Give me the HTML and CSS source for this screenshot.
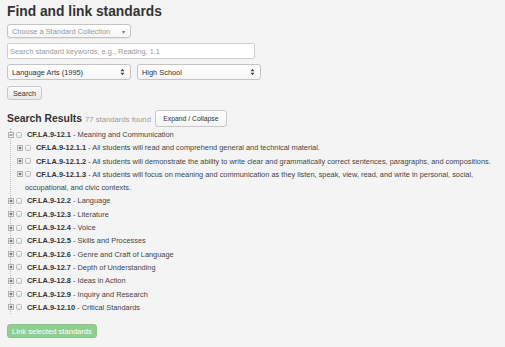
FILE: index.html
```html
<!DOCTYPE html>
<html lang="en">
<head>
  <meta charset="UTF-8">
  <title>Find and link standards</title>
  <link rel="stylesheet" href="styles.css">
</head>
<body>

  <div class="page">
    <h1>Find and link standards</h1>

    <!-- Filters -->
    <div class="fake-select collection">
      <span class="placeholder">Choose a Standard Collection</span>
      <span class="caret">&#9662;</span>
    </div>

    <div class="search-input">Search standard keywords, e.g., Reading, 1.1</div>

    <div class="select-row">
      <div class="fake-select native">
        <span>Language Arts (1995)</span>
        <svg class="updown" width="5" height="8" viewBox="0 0 5 8"><path d="M0.5 3.2 L2.5 0.8 L4.5 3.2 Z M0.5 4.8 L2.5 7.2 L4.5 4.8 Z" fill="#444"/></svg>
      </div>
      <div class="fake-select native">
        <span>High School</span>
        <svg class="updown" width="5" height="8" viewBox="0 0 5 8"><path d="M0.5 3.2 L2.5 0.8 L4.5 3.2 Z M0.5 4.8 L2.5 7.2 L4.5 4.8 Z" fill="#444"/></svg>
      </div>
    </div>

    <button class="btn search-btn">Search</button>

    <!-- Results -->
    <div class="results-head">
      <h3>Search Results</h3>
      <span class="count">77 standards found</span>
      <button class="btn toggle-btn">Expand / Collapse</button>
    </div>

    <ul class="tree">
      <li class="node">
        <div class="row">
          <svg class="ocl" width="6" height="6" viewBox="0 0 6 6"><rect x="0.5" y="0.5" width="5" height="5" fill="#fafafa" stroke="#b0b0b0"/><path d="M1.5 3 H4.5" stroke="#555"/></svg><span class="check"></span><b>CF.LA.9-12.1</b> - Meaning and Communication
        </div>
        <ul class="children">
          <li class="row">
            <svg class="ocl" width="6" height="6" viewBox="0 0 6 6"><rect x="0.5" y="0.5" width="5" height="5" fill="#fafafa" stroke="#b0b0b0"/><path d="M1.5 3 H4.5 M3 1.5 V4.5" stroke="#555"/></svg><span class="check"></span><b>CF.LA.9-12.1.1</b> - All students will read and comprehend general and technical material.
          </li>
          <li class="row">
            <svg class="ocl" width="6" height="6" viewBox="0 0 6 6"><rect x="0.5" y="0.5" width="5" height="5" fill="#fafafa" stroke="#b0b0b0"/><path d="M1.5 3 H4.5 M3 1.5 V4.5" stroke="#555"/></svg><span class="check"></span><b>CF.LA.9-12.1.2</b> - All students will demonstrate the ability to write clear and grammatically correct sentences, paragraphs, and compositions.
          </li>
          <li class="row">
            <svg class="ocl" width="6" height="6" viewBox="0 0 6 6"><rect x="0.5" y="0.5" width="5" height="5" fill="#fafafa" stroke="#b0b0b0"/><path d="M1.5 3 H4.5 M3 1.5 V4.5" stroke="#555"/></svg><span class="check"></span><b>CF.LA.9-12.1.3</b> - All students will focus on meaning and communication as they listen, speak, view, read, and write in personal, social, occupational, and civic contexts.
          </li>
        </ul>
      </li>
      <li class="row"><svg class="ocl" width="6" height="6" viewBox="0 0 6 6"><rect x="0.5" y="0.5" width="5" height="5" fill="#fafafa" stroke="#b0b0b0"/><path d="M1.5 3 H4.5 M3 1.5 V4.5" stroke="#555"/></svg><span class="check"></span><b>CF.LA.9-12.2</b> - Language</li>
      <li class="row"><svg class="ocl" width="6" height="6" viewBox="0 0 6 6"><rect x="0.5" y="0.5" width="5" height="5" fill="#fafafa" stroke="#b0b0b0"/><path d="M1.5 3 H4.5 M3 1.5 V4.5" stroke="#555"/></svg><span class="check"></span><b>CF.LA.9-12.3</b> - Literature</li>
      <li class="row"><svg class="ocl" width="6" height="6" viewBox="0 0 6 6"><rect x="0.5" y="0.5" width="5" height="5" fill="#fafafa" stroke="#b0b0b0"/><path d="M1.5 3 H4.5 M3 1.5 V4.5" stroke="#555"/></svg><span class="check"></span><b>CF.LA.9-12.4</b> - Voice</li>
      <li class="row"><svg class="ocl" width="6" height="6" viewBox="0 0 6 6"><rect x="0.5" y="0.5" width="5" height="5" fill="#fafafa" stroke="#b0b0b0"/><path d="M1.5 3 H4.5 M3 1.5 V4.5" stroke="#555"/></svg><span class="check"></span><b>CF.LA.9-12.5</b> - Skills and Processes</li>
      <li class="row"><svg class="ocl" width="6" height="6" viewBox="0 0 6 6"><rect x="0.5" y="0.5" width="5" height="5" fill="#fafafa" stroke="#b0b0b0"/><path d="M1.5 3 H4.5 M3 1.5 V4.5" stroke="#555"/></svg><span class="check"></span><b>CF.LA.9-12.6</b> - Genre and Craft of Language</li>
      <li class="row"><svg class="ocl" width="6" height="6" viewBox="0 0 6 6"><rect x="0.5" y="0.5" width="5" height="5" fill="#fafafa" stroke="#b0b0b0"/><path d="M1.5 3 H4.5 M3 1.5 V4.5" stroke="#555"/></svg><span class="check"></span><b>CF.LA.9-12.7</b> - Depth of Understanding</li>
      <li class="row"><svg class="ocl" width="6" height="6" viewBox="0 0 6 6"><rect x="0.5" y="0.5" width="5" height="5" fill="#fafafa" stroke="#b0b0b0"/><path d="M1.5 3 H4.5 M3 1.5 V4.5" stroke="#555"/></svg><span class="check"></span><b>CF.LA.9-12.8</b> - Ideas in Action</li>
      <li class="row"><svg class="ocl" width="6" height="6" viewBox="0 0 6 6"><rect x="0.5" y="0.5" width="5" height="5" fill="#fafafa" stroke="#b0b0b0"/><path d="M1.5 3 H4.5 M3 1.5 V4.5" stroke="#555"/></svg><span class="check"></span><b>CF.LA.9-12.9</b> - Inquiry and Research</li>
      <li class="row"><svg class="ocl" width="6" height="6" viewBox="0 0 6 6"><rect x="0.5" y="0.5" width="5" height="5" fill="#fafafa" stroke="#b0b0b0"/><path d="M1.5 3 H4.5 M3 1.5 V4.5" stroke="#555"/></svg><span class="check"></span><b>CF.LA.9-12.10</b> - Critical Standards</li>
    </ul>

    <button class="btn link-btn" disabled>Link selected standards</button>
  </div>

</body>
</html>
```

FILE: styles.css
```css
* {
  box-sizing: border-box;
}

body {
  margin: 0;
  background-color: #f4f4f4;
  color: #333;
  font-family: "Liberation Sans", Arial, sans-serif;
  font-size: 7.4px;
}

.page {
  padding: 4px 7px 0 7px;
}

h1 {
  margin: 0 0 4px;
  font-size: 13.8px;
  line-height: 16px;
  font-weight: bold;
  color: #333;
}

.fake-select {
  display: flex;
  align-items: center;
  justify-content: space-between;
  background: linear-gradient(#fff, #f6f6f6);
  border: 1px solid #c4c4c4;
  border-radius: 3px;
  padding: 0 4px;
}

.collection {
  width: 124px;
  height: 14px;
  margin-bottom: 5px;
  box-shadow: 0 1px 1px rgba(0, 0, 0, 0.06);
}

.collection .placeholder {
  color: #999;
}

.collection .caret {
  color: #777;
  font-size: 6px;
  margin-right: 1px;
}

.search-input {
  width: 248px;
  height: 16px;
  margin-bottom: 5px;
  padding: 0 2px;
  display: flex;
  align-items: center;
  background-color: #fff;
  border: 1px solid #d0d0d0;
  border-radius: 2px;
  color: #999;
}

.select-row {
  display: flex;
  gap: 6px;
  margin-bottom: 6px;
}

.native {
  width: 124px;
  height: 16px;
  color: #333;
}

.updown {
  margin-right: 1px;
}

.btn {
  font-family: "Liberation Sans", Arial, sans-serif;
  color: #333;
  background: linear-gradient(#fdfdfd, #e8e8e8);
  border: 1px solid #c8c8c8;
  border-radius: 3px;
  cursor: pointer;
  padding: 0;
}

.search-btn {
  display: block;
  width: 35px;
  height: 14px;
  font-size: 7.3px;
  margin-bottom: 10px;
}

.results-head {
  display: flex;
  align-items: center;
  height: 17px;
  margin-bottom: 1px;
}

.results-head h3 {
  margin: 0;
  font-size: 10.4px;
  font-weight: bold;
  color: #333;
}

.count {
  color: #9a9a9a;
  font-size: 7.7px;
  margin-left: 3px;
  margin-top: 2px;
}

.toggle-btn {
  height: 17px;
  width: 72px;
  font-size: 6.8px;
  margin-left: 4px;
  background: linear-gradient(#fff, #f3f3f3);
}

.tree {
  list-style: none;
  margin: 0 0 0 3px;
  padding: 0;
  border-left: 1px dotted #bdbdbd;
}

.tree ul {
  list-style: none;
  margin: 0;
}

.children {
  padding: 0 0 0 9px;
}

.row {
  line-height: 13.3px;
  padding-left: 5px;
  color: #444;
}

.row b {
  color: #333;
}

.ocl {
  display: inline-block;
  vertical-align: -0.5px;
  margin-left: -8px;
  margin-right: 2px;
}

.check {
  display: inline-block;
  width: 6px;
  height: 6px;
  vertical-align: -0.5px;
  margin-right: 5px;
  border: 1px solid #bcbcbc;
  border-radius: 1.5px;
  background: linear-gradient(#fff, #e2e2e2);
}

.link-btn {
  margin-top: 10px;
  width: 90px;
  height: 14px;
  font-size: 7.6px;
  color: #fff;
  background: #91cd91;
  border: 1px solid #86c686;
  cursor: default;
}
```
